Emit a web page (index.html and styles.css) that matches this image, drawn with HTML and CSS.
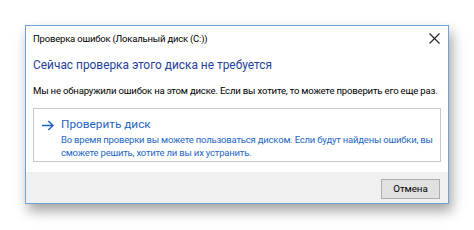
FILE: index.html
```html
<!DOCTYPE html>
<html lang="ru">
<head>
<meta charset="utf-8">
<link rel="stylesheet" href="styles.css">
</head>
<body>
<div class="stage">
  <div class="window">
    <div class="titlebar">
      <span class="title">Проверка ошибок (Локальный диск (C:))</span>
      <svg class="close" width="11" height="11" viewBox="0 0 11 11"><path d="M0.5 0.5 L10.5 10.5 M10.5 0.5 L0.5 10.5" stroke="#222" stroke-width="1.1" fill="none"/></svg>
    </div>
    <div class="content">
      <div class="heading">Сейчас проверка этого диска не требуется</div>
      <div class="body">Мы не обнаружили ошибок на этом диске. Если вы хотите, то можете проверить его еще раз.</div>
      <div class="cmdlink">
        <svg class="arrow" width="12" height="11" viewBox="0 0 12 11"><path d="M0 5.5 H11 M6.3 1 L11 5.5 L6.3 10" stroke="#1f63c1" stroke-width="1.4" fill="none"/></svg>
        <div class="cmdtext">
          <div class="cmdtitle">Проверить диск</div>
          <div class="cmddesc">Во время проверки вы можете пользоваться диском. Если будут найдены ошибки, вы<br>сможете решить, хотите ли вы их устранить.</div>
        </div>
      </div>
    </div>
    <div class="footer">
      <div class="button">Отмена</div>
    </div>
  </div>
</div>
</body>
</html>
```
FILE: styles.css
```css
html, body { margin: 0; padding: 0; background: #ffffff; }
body { width: 474px; height: 230px; overflow: hidden; font-family: Roboto, "Noto Sans", sans-serif; }
.stage { padding: 25px 0 0 25px; }
.window {
  width: 422px;
  border: 1px solid #6fa3d8;
  background: #ffffff;
  box-shadow: 3px 7px 12px rgba(0,0,0,0.36);
  display: flex;
  flex-direction: column;
}
.titlebar {
  height: 24px;
  display: flex;
  align-items: center;
  justify-content: space-between;
  padding: 0 7px 0 7px;
}
.title { font-size: 9.5px; letter-spacing: -0.2px; color: #000; white-space: nowrap; }
.close { margin-right: 1px; }
.content { padding: 5px 7px 0 7px; }
.heading { font-size: 11.9px; line-height: 20px; color: #1f3f98; white-space: nowrap; }
.body { margin-top: 8px; font-size: 9.6px; letter-spacing: -0.2px; line-height: 16px; color: #000; white-space: nowrap; }
.cmdlink {
  margin-top: 9px;
  height: 52px;
  border: 1px solid #c9c9c9;
  display: flex;
  align-items: flex-start;
  padding: 0 6px 0 8px;
}
.arrow { margin-top: 11px; margin-right: 7px; flex: none; }
.cmdtext { padding-top: 7px; min-width: 0; }
.cmdtitle { font-size: 11.8px; line-height: 17px; color: #1f63c1; white-space: nowrap; }
.cmddesc { font-size: 9.5px; letter-spacing: -0.2px; line-height: 13px; color: #2467c4; white-space: nowrap; }
.footer {
  margin-top: 10px;
  height: 31px;
  background: #f0f0f0;
  display: flex;
  justify-content: flex-end;
  align-items: flex-start;
  padding: 7px 8px 0 0;
  box-sizing: border-box;
}
.button {
  width: 57px;
  height: 18px;
  border: 1px solid #adadad;
  background: #e1e1e1;
  font-size: 9.8px;
  letter-spacing: -0.1px;
  line-height: 18px;
  text-align: center;
  color: #000;
}
```
